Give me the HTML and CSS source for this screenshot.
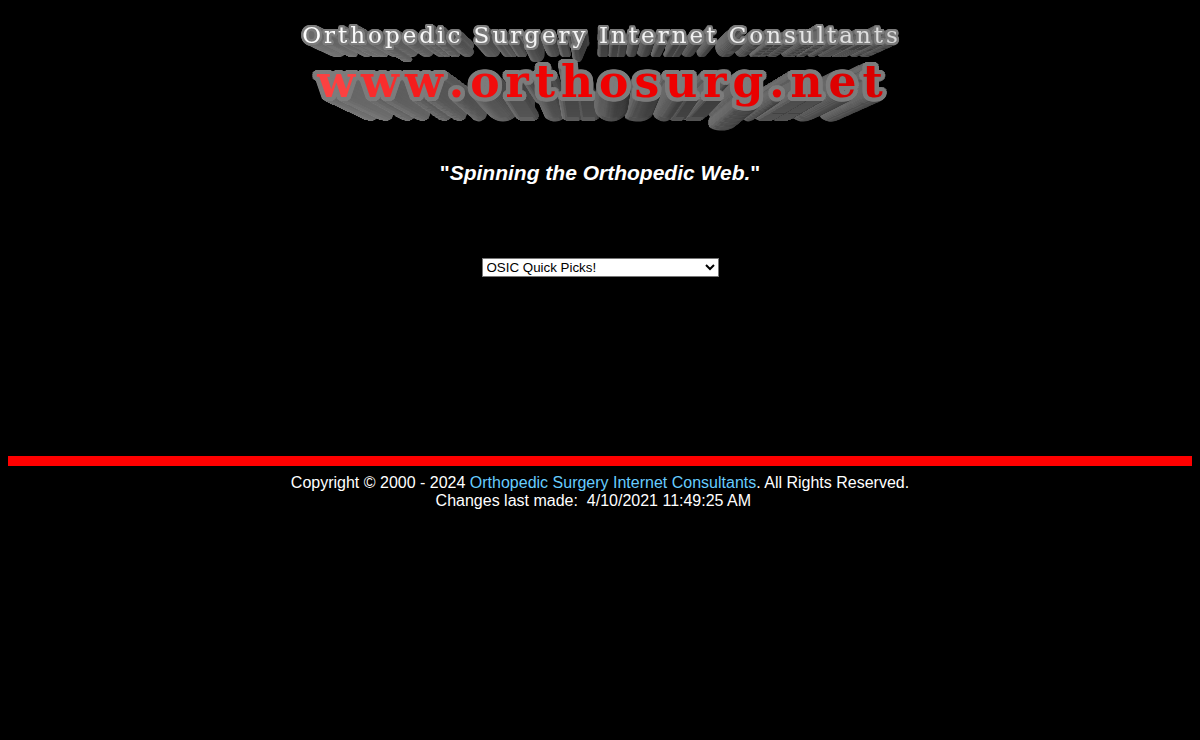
FILE: index.html
```html
<html>
<head>
<title>Orthopedic Surgery Internet Consultants</title>
<link rel="stylesheet" href="styles.css">
</head>
<body>

<div id="header">
  <h1 class="logo">
    <span class="logo-name">Orthopedic Surgery Internet Consultants</span>
    <span class="logo-site">www.orthosurg.net</span>
  </h1>
</div>

<h2 class="slogan">"<i>Spinning the Orthopedic Web.</i>"</h2>

<form class="picks">
  <select name="picks" aria-label="OSIC Quick Picks">
    <option>OSIC Quick Picks!</option>
  </select>
</form>

<hr>

<div id="footer">
  Copyright &copy; 2000 - 2024 <a href="#">Orthopedic Surgery Internet Consultants</a>. All Rights Reserved.<br>
  Changes last made:&nbsp; 4/10/2021 11:49:25 AM&nbsp;&nbsp;&nbsp;
</div>

<script src="logo.js"></script>
</body>
</html>
```
FILE: styles.css
```css
body {
  background:#000;
  color:#fff;
  font-family:"Liberation Sans", arial, sans-serif;
  font-size:16px;
  line-height:18px;
  margin:8px;
  text-align:center;
}

a {
  color:#66ccff;
  text-decoration:none;
}

.logo {
  margin:0;
  padding-top:11px;
  font-family:"DejaVu Serif", serif;
  font-weight:normal;
  white-space:nowrap;
  will-change:transform;
}

.logo-name, .logo-site {
  display:block;
  width:max-content;
  margin:0 auto;
  position:relative;
  font-kerning:none;
}

.logo-name {
  color:#f4f4f4;
  font-size:23px;
  line-height:32px;
  letter-spacing:3px;
  padding-left:3px;
  z-index:1;
}

.logo-site {
  color:#f00000;
  font-size:44px;
  font-weight:bold;
  line-height:62px;
  letter-spacing:6px;
  padding-left:6px;
}

.logo-name span, .logo-site span {
  position:relative;
}

.slogan {
  font-size:21px;
  line-height:24px;
  margin:48px 0 73px;
}

.picks {
  margin:0;
}

.picks select {
  width:237px;
  height:19px;
  display:block;
  margin:0 auto;
  padding:0;
  background:#fff;
  color:#000;
  border:1px solid #767676;
  border-radius:0;
  font-family:"Liberation Sans", arial, sans-serif;
}

hr {
  height:10px;
  margin:179px 0 8px;
  border:0;
  background:#f00;
}
```
FILE: logo.js
```javascript
extrude(document.querySelector(".logo-name"), {
  pull: 0.09, depth: 12, rim: 2.4,
  left: [255, 255, 255], middle: [244, 244, 244], right: [215, 215, 215]
});
extrude(document.querySelector(".logo-site"), {
  pull: 0.16, depth: 20, rim: 4.4,
  left: [255, 80, 80], middle: [240, 0, 0], right: [215, 0, 0]
});

// every letter gets a grey rim and a solid shadow towards the middle of the line
function extrude(line, o) {
  var letters = line.textContent.split("");
  line.textContent = "";
  letters.forEach(function(c) {
    var span = document.createElement("span");
    span.textContent = c;
    line.appendChild(span);
  });

  var middle = line.offsetWidth / 2;
  Array.prototype.forEach.call(line.children, function(span, i) {
    var off = middle - (span.offsetLeft + span.offsetWidth / 2);
    var side = off / middle;
    var dx = off * o.pull;
    var steps = Math.ceil(Math.max(o.depth, Math.abs(dx)));
    var shadows = ring(0, 0, o.rim, 16, function() { return 124; });
    for (var s = 1; s <= steps; s++) {
      var t = s / steps;
      shadows = shadows.concat(ring(dx * t, o.depth * t, o.rim * (1 - 0.1 * t), 12, function(a) {
        var base = side > 0 ? 82 + 34 * side : 76;
        return Math.round(base - 30 * Math.cos(a) * (1 - Math.max(side, 0) * 0.7) + 6 * t);
      }));
    }
    span.style.textShadow = shadows.join(",");
    span.style.zIndex = off > 0 ? i : letters.length - i;
    span.style.color = tint(side, o);
  });
}

function ring(x, y, radius, count, shade) {
  var list = [];
  for (var n = 0; n < count; n++) {
    var a = Math.PI * 2 * n / count;
    var grey = shade(a);
    list.push((x + radius * Math.cos(a)).toFixed(2) + "px " + (y + radius * Math.sin(a)).toFixed(2) +
      "px rgb(" + grey + "," + grey + "," + grey + ")");
  }
  return list;
}

// the light comes from the left: pale at that end, dull at the other
function tint(side, o) {
  var end = side > 0 ? o.left : o.right;
  var k = side * side;
  return "rgb(" + end.map(function(v, n) {
    return Math.round(o.middle[n] * (1 - k) + v * k);
  }).join(",") + ")";
}
```
